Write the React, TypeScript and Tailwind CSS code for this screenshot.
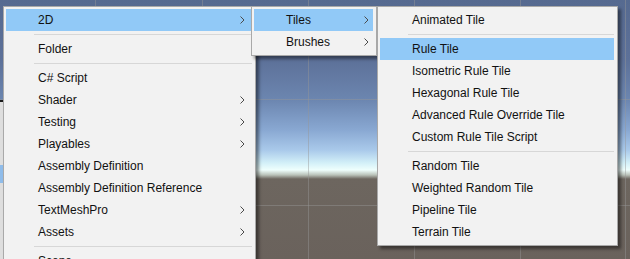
import React from "react";

type Item = { label?: string; sub?: boolean; active?: boolean; sep?: boolean };

const mainItems: Item[] = [
  { label: "2D", sub: true, active: true },
  { sep: true },
  { label: "Folder" },
  { sep: true },
  { label: "C# Script" },
  { label: "Shader", sub: true },
  { label: "Testing", sub: true },
  { label: "Playables", sub: true },
  { label: "Assembly Definition" },
  { label: "Assembly Definition Reference" },
  { label: "TextMeshPro", sub: true },
  { label: "Assets", sub: true },
  { sep: true },
  { label: "Scene" },
];

const tileGroupItems: Item[] = [
  { label: "Tiles", sub: true, active: true },
  { label: "Brushes", sub: true },
];

const tileItems: Item[] = [
  { label: "Animated Tile" },
  { sep: true },
  { label: "Rule Tile", active: true },
  { label: "Isometric Rule Tile" },
  { label: "Hexagonal Rule Tile" },
  { label: "Advanced Rule Override Tile" },
  { label: "Custom Rule Tile Script" },
  { sep: true },
  { label: "Random Tile" },
  { label: "Weighted Random Tile" },
  { label: "Pipeline Tile" },
  { label: "Terrain Tile" },
];

function Chevron() {
  return (
    <svg width="5" height="8" viewBox="0 0 5 8" className="shrink-0">
      <polyline points="0.5,0.5 4,4 0.5,7.5" fill="none" stroke="#4a4a4a" strokeWidth="1" />
    </svg>
  );
}

function Menu({ items, className, chevronPad }: { items: Item[]; className: string; chevronPad: string }) {
  return (
    <div
      className={`absolute bg-[#f2f2f2] border border-[#a9a9a9] pt-[2px] pb-[2px] pl-[2px] pr-[3px] shadow-[3px_3px_3px_rgba(0,0,0,0.45)] ${className}`}
    >
      {items.map((it, i) =>
        it.sep ? (
          <div key={i} className="h-[7px] flex items-center pl-[28px]">
            <div className="h-px w-full bg-[#d7d7d7]" />
          </div>
        ) : (
          <div
            key={i}
            className={`h-[22px] flex items-center justify-between pl-[32px] ${chevronPad} ${
              it.active ? "bg-[#91c9f7]" : ""
            }`}
          >
            <span className="text-[12px] text-[#111] whitespace-nowrap">{it.label}</span>
            {it.sub && <Chevron />}
          </div>
        )
      )}
    </div>
  );
}

export default function App() {
  return (
    <div
      className="relative w-[630px] h-[259px] overflow-hidden bg-[linear-gradient(180deg,#566a90_0px,#5d7199_60px,#6c86b0_100px,#89a8d2_130px,#a9c9ea_150px,#d3f0f8_163px,#effffd_170px,#b9c1b8_175px,#6d665f_179px,#6a625c_259px)]"
      style={{ fontFamily: '"Liberation Sans", Arial, sans-serif' }}
    >
      {/* scene grid */}
      <svg className="absolute inset-0" width="630" height="259">
        {[95, 202, 308, 414, 520, 625].map((x) => (
          <line key={x} x1={x + 0.5} y1="0" x2={x + 0.5} y2="259" stroke="rgba(150,150,150,0.45)" strokeWidth="1" />
        ))}
        {[99, 205].map((y) => (
          <line key={y} x1="0" y1={y + 0.5} x2="630" y2={y + 0.5} stroke="rgba(150,150,150,0.45)" strokeWidth="1" />
        ))}
      </svg>

      {/* project panel peeking on the left */}
      <div className="absolute left-0 top-[100px] w-[40px] h-[159px] border-t-2 border-[#1a1a1a] bg-[#dedede] flex flex-col">
        <div className="mt-[63px] h-[18px] bg-[#8fbcea]" />
      </div>

      <Menu items={mainItems} className="left-[3px] top-[6px] w-[253px]" chevronPad="pr-[7px]" />
      <Menu items={tileGroupItems} className="left-[251px] top-[6px] w-[126px]" chevronPad="pr-[4px]" />
      <Menu items={tileItems} className="left-[377px] top-[6px] w-[241px]" chevronPad="pr-[4px]" />
    </div>
  );
}
